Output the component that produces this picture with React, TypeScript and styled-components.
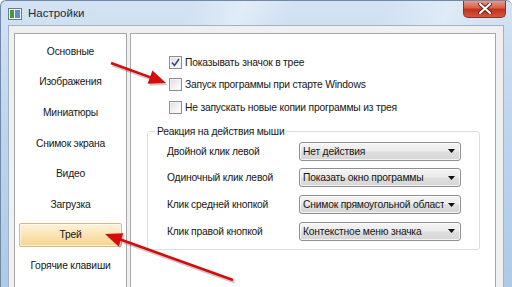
import React from "react";
import styled, { createGlobalStyle } from "styled-components";

const GlobalStyle = createGlobalStyle`
  html, body { margin: 0; padding: 0; overflow: hidden; background: #ffffff; }
  * { box-sizing: border-box; }
`;

const FONT = `"Liberation Sans", "Noto Sans", sans-serif`;

const Window = styled.div`
  position: relative;
  width: 512px;
  height: 287px;
  display: flex;
  flex-direction: column;
  font-family: ${FONT};
  font-size: 10.3px;
  letter-spacing: -0.2px;
  color: #161616;
  background:
    linear-gradient(115deg, rgba(255,255,255,0) 30%, rgba(255,255,255,0.35) 38%, rgba(255,255,255,0) 46%, rgba(255,255,255,0) 60%, rgba(255,255,255,0.3) 70%, rgba(255,255,255,0) 80%),
    linear-gradient(180deg, #d3e3f3 0%, #c0d6ed 40%, #afc9e6 100%);
  border-left: 1px solid #6f8aa8;
  border-top: 1px solid #6f8aa8;
  border-radius: 6px 6px 0 0;
  overflow: hidden;
`;

const TitleBar = styled.div`
  height: 24px;
  display: flex;
  align-items: flex-start;
  padding-left: 7px;
`;

const TitleIcon = styled.svg`
  width: 14px;
  height: 12px;
  margin-top: 7px;
  flex: none;
`;

const TitleText = styled.span`
  margin-left: 6px;
  margin-top: 6px;
  font-size: 11.5px;
  letter-spacing: 0;
  color: #1c2a3a;
`;

const CloseButton = styled.div`
  margin-left: auto;
  margin-right: 6px;
  width: 43px;
  height: 18px;
  margin-top: -1px;
  border: 1px solid #7a3a32;
  border-top: none;
  border-radius: 0 0 5px 5px;
  background: linear-gradient(180deg, #e9a193 0%, #d9624d 45%, #c4321c 55%, #d6553b 100%);
  display: flex;
  align-items: center;
  justify-content: center;
`;

const Client = styled.div`
  flex: 1;
  margin: 0 8px 0 7px;
  background: #f0f0f0;
  border: 1px solid #9fb2c8;
  border-bottom: none;
  display: flex;
  gap: 3px;
  padding: 7px 7px 0 5px;
  min-height: 0;
`;

const Panel = styled.div<{ $width?: number }>`
  background: #ffffff;
  border: 1px solid #a7a7a7;
  border-bottom: none;
  ${(p) => (p.$width ? `width: ${p.$width}px; flex: none;` : "flex: 1;")}
  min-height: 0;
`;

const NavList = styled.div`
  display: flex;
  flex-direction: column;
  padding: 2px 4px 0 4px;
`;

const NavItem = styled.div<{ $active?: boolean }>`
  height: 30.6px;
  display: flex;
  align-items: center;
  justify-content: center;
  position: relative;
  ${(p) =>
    p.$active
      ? `
    &::before {
      content: "";
      position: absolute;
      left: 0; right: 0; top: 3px; bottom: 3px;
      border: 1px solid #d4b98a;
      border-radius: 2px;
      background: linear-gradient(180deg, #fdf2d8 0%, #fbe4b4 50%, #f7d48c 100%);
      box-shadow: inset 0 0 0 1px rgba(255,255,255,0.6);
    }
  `
      : ""}
`;

const NavLabel = styled.span`
  position: relative;
`;

const Content = styled.div`
  display: flex;
  flex-direction: column;
  padding: 20px 15px 0 16px;
`;

const CheckList = styled.div`
  display: flex;
  flex-direction: column;
  gap: 6.5px;
  padding-left: 22px;
`;

const CheckRow = styled.label`
  display: flex;
  align-items: center;
  gap: 3px;
  height: 16px;
  white-space: nowrap;
`;

const CheckBox = styled.span`
  width: 13px;
  height: 13px;
  flex: none;
  border: 1px solid #8e8f8f;
  background: linear-gradient(135deg, #dcdcdc 0%, #f4f4f4 60%, #ffffff 100%);
  box-shadow: inset 0 0 0 1px #f4f4f4;
  display: flex;
  align-items: center;
  justify-content: center;
`;

const GroupBox = styled.fieldset`
  margin: 11px 0 0 0;
  padding: 4.5px 18px 8px 19px;
  border: 1px solid #d5dfe5;
  border-radius: 3px;
  display: grid;
  grid-template-columns: 1fr 162px;
  grid-auto-rows: 19px;
  row-gap: 7.8px;
  align-items: center;
`;

const Legend = styled.legend`
  padding: 0 2px;
  margin-left: -12px;
`;

const RowLabel = styled.span`
  white-space: nowrap;
`;

const Select = styled.div`
  height: 19px;
  border: 1px solid #8e8f8f;
  border-radius: 3px;
  background: linear-gradient(180deg, #f5f5f5 0%, #ebebeb 48%, #dedede 52%, #d6d6d6 100%);
  box-shadow: inset 0 0 0 1px rgba(255,255,255,0.7);
  display: flex;
  align-items: center;
  padding: 0 5px 0 3px;
  gap: 4px;
`;

const SelectText = styled.span`
  flex: 1;
  overflow: hidden;
  white-space: nowrap;
`;

const Arrow = styled.svg`
  width: 7px;
  height: 4px;
  flex: none;
`;

const Overlay = styled.svg`
  position: absolute;
  left: 0;
  top: 0;
  width: 512px;
  height: 287px;
  pointer-events: none;
`;

const navItems = [
  "Основные",
  "Изображения",
  "Миниатюры",
  "Снимок экрана",
  "Видео",
  "Загрузка",
  "Трей",
  "Горячие клавиши",
];

const checks = [
  { label: "Показывать значок в трее", checked: true },
  { label: "Запуск программы при старте Windows", checked: false },
  { label: "Не запускать новые копии программы из трея", checked: false },
];

const rows = [
  { label: "Двойной клик левой", value: "Нет действия" },
  { label: "Одиночный клик левой", value: "Показать окно программы" },
  { label: "Клик средней кнопкой", value: "Снимок прямоугольной области" },
  { label: "Клик правой кнопкой", value: "Контекстное меню значка" },
];

function RedArrow({ x1, y1, x2, y2 }: { x1: number; y1: number; x2: number; y2: number }) {
  const dx = x2 - x1;
  const dy = y2 - y1;
  const len = Math.hypot(dx, dy);
  const ux = dx / len;
  const uy = dy / len;
  const hl = 17;
  const hw = 7;
  const bx = x2 - ux * hl;
  const by = y2 - uy * hl;
  const px = -uy;
  const py = ux;
  const pts = `${x2},${y2} ${bx + px * hw},${by + py * hw} ${bx - px * hw},${by - py * hw}`;
  return (
    <g>
      <g transform="translate(1.5,2)" opacity="0.25">
        <line x1={x1} y1={y1} x2={bx} y2={by} stroke="#333" strokeWidth="3" />
        <polygon points={pts} fill="#333" />
      </g>
      <line x1={x1} y1={y1} x2={bx + ux * 2} y2={by + uy * 2} stroke="#d80a0a" strokeWidth="2.6" />
      <polygon points={pts} fill="#d80a0a" />
    </g>
  );
}

export default function App() {
  return (
    <>
      <GlobalStyle />
      <Window>
        <TitleBar>
          <TitleIcon viewBox="0 0 14 12">
            <rect x="0.5" y="0.5" width="13" height="11" fill="#f4f4f4" stroke="#6c7a86" />
            <rect x="2" y="2" width="4" height="8" fill="#3d9a45" />
            <rect x="7" y="2" width="5" height="8" fill="#5b8fc8" />
          </TitleIcon>
          <TitleText>Настройки</TitleText>
          <CloseButton>
            <svg width="14" height="11" viewBox="0 0 14 11">
              <path d="M2 1 L12 10 M12 1 L2 10" stroke="#5a1d14" strokeWidth="4" strokeLinecap="round" />
              <path d="M2 1 L12 10 M12 1 L2 10" stroke="#ffffff" strokeWidth="2.2" strokeLinecap="round" />
            </svg>
          </CloseButton>
        </TitleBar>
        <Client>
          <Panel $width={113}>
            <NavList>
              {navItems.map((n) => (
                <NavItem key={n} $active={n === "Трей"}>
                  <NavLabel>{n}</NavLabel>
                </NavItem>
              ))}
            </NavList>
          </Panel>
          <Panel>
            <Content>
              <CheckList>
                {checks.map((c) => (
                  <CheckRow key={c.label}>
                    <CheckBox>
                      {c.checked && (
                        <svg width="9" height="9" viewBox="0 0 9 9">
                          <path d="M1 4.5 L3.5 7.5 L8 1" stroke="#2b4e93" strokeWidth="1.6" fill="none" />
                        </svg>
                      )}
                    </CheckBox>
                    {c.label}
                  </CheckRow>
                ))}
              </CheckList>
              <GroupBox>
                <Legend>Реакция на действия мыши</Legend>
                {rows.map((r) => (
                  <React.Fragment key={r.label}>
                    <RowLabel>{r.label}</RowLabel>
                    <Select>
                      <SelectText>{r.value}</SelectText>
                      <Arrow viewBox="0 0 7 4">
                        <polygon points="0,0 7,0 3.5,4" fill="#111" />
                      </Arrow>
                    </Select>
                  </React.Fragment>
                ))}
              </GroupBox>
            </Content>
          </Panel>
        </Client>
        <Overlay viewBox="0 0 512 287">
          <RedArrow x1={110} y1={62} x2={165} y2={82} />
          <RedArrow x1={232} y1={279} x2={104} y2={233} />
        </Overlay>
      </Window>
    </>
  );
}
